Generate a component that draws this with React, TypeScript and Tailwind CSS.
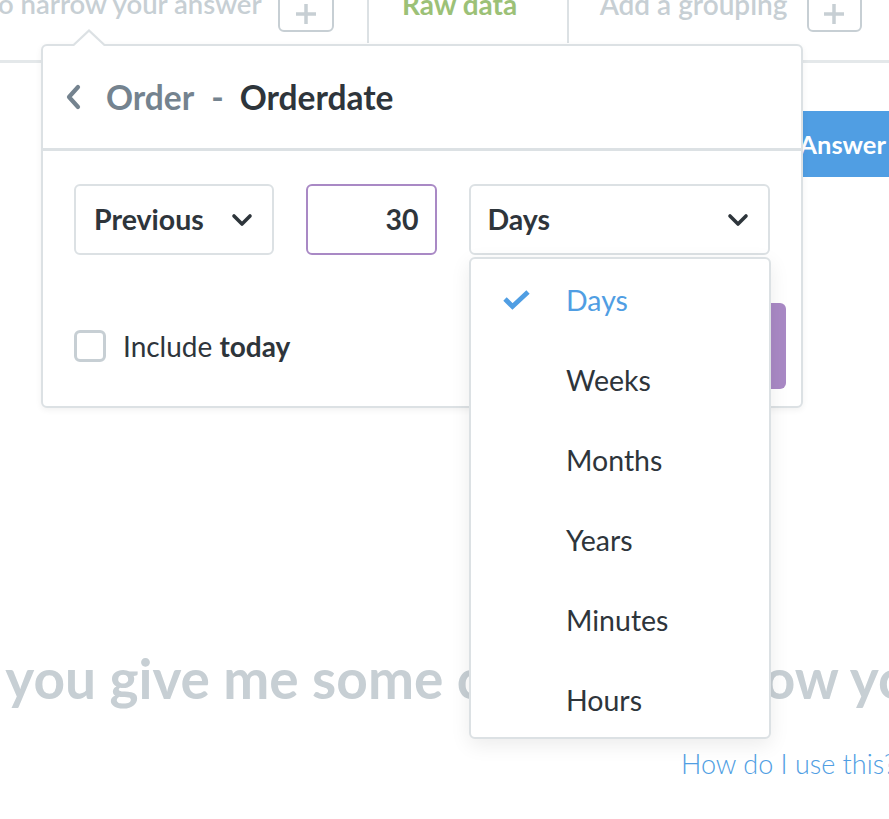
import React from 'react';

const Chevron = ({ className = '' }: { className?: string }) => (
  <svg className={className} viewBox="0 0 24 24" fill="none" stroke="currentColor" strokeWidth={3.6} strokeLinecap="round" strokeLinejoin="round">
    <path d="M4 8l8 8 8-8" />
  </svg>
);

const Plus = () => (
  <svg className="w-[22px] h-[22px] text-[#c7cfd4]" viewBox="0 0 22 22" fill="none" stroke="currentColor" strokeWidth={3.5}>
    <path d="M11 1v20M1 11h20" />
  </svg>
);

const options = ['Days', 'Weeks', 'Months', 'Years', 'Minutes', 'Hours'];

export default function App() {
  return (
    <div className="relative w-[889px] h-[819px] overflow-hidden bg-white font-['Lato','Noto_Sans',sans-serif]">
      {/* top query bar */}
      <div className="h-[63px] border-b-[3px] border-[#e4e8ea] flex">
        <div className="flex items-start -mt-[14px] -ml-[12px]">
          <span className="text-[27.5px] font-semibold text-[#c7cfd4] leading-[36px] whitespace-nowrap">to narrow your answer</span>
          <div className="ml-[16px] w-[56px] h-[46px] border-2 border-[#c7cfd4] rounded-[6px] flex items-center justify-center pt-[10px]">
            <Plus />
          </div>
        </div>
        <div className="ml-[33px] h-[43px] border-l-2 border-[#dce1e4]" />
        <div className="-mt-[14px] w-[198px] flex justify-center">
          <span className="text-[28px] font-bold text-[#9cc177] leading-[36px] -ml-[16px]">Raw data</span>
        </div>
        <div className="h-[43px] border-l-2 border-[#dce1e4]" />
        <div className="flex items-start -mt-[14px] ml-[31px]">
          <span className="text-[28px] font-semibold text-[#c7cfd4] leading-[36px] whitespace-nowrap">Add a grouping</span>
          <div className="ml-[19px] w-[55px] h-[46px] border-2 border-[#c7cfd4] rounded-[6px] flex items-center justify-center pt-[10px]">
            <Plus />
          </div>
        </div>
      </div>

      {/* answer button row */}
      <div className="flex justify-end mt-[48px]">
        <div className="h-[66px] bg-[#509ee3] text-white font-bold text-[25.5px] flex items-center pl-[24px] -mr-[14px] pr-[17px]">Get Answer</div>
      </div>

      {/* big prompt */}
      <div className="mt-[469px] -ml-[150px] whitespace-nowrap text-[55px] font-bold text-[#c7cfd4] leading-[64px]">
        Could you give me some context on how you want to narrow your answer?
      </div>
      <div className="mt-[36px] pl-[681px] whitespace-nowrap text-[27px] font-light text-[#509ee3] leading-[36px]">
        How do I use this?
      </div>

      {/* popover */}
      <div className="absolute left-[41px] top-[44px] w-[762px] h-[364px] bg-white border-2 border-[#dce1e4] rounded-[6px] shadow-[0_2px_6px_rgba(0,0,0,0.06)]">
        <div className="absolute -top-[17px] left-[28px] w-0 h-0 border-l-[18px] border-r-[18px] border-b-[17px] border-l-transparent border-r-transparent border-b-[#dce1e4]" />
        <div className="absolute -top-[14px] left-[30px] w-0 h-0 border-l-[16px] border-r-[16px] border-b-[15px] border-l-transparent border-r-transparent border-b-white" />
        <div className="h-[105px] border-b-[3px] border-[#dce1e4] flex items-center pl-[22px]">
          <svg className="w-[18px] h-[26px] text-[#74838f]" viewBox="0 0 18 26" fill="none" stroke="currentColor" strokeWidth={4.2} strokeLinecap="round" strokeLinejoin="round">
            <path d="M13 3L4 13l9 10" />
          </svg>
          <span className="ml-[23px] text-[33.5px] font-bold text-[#74838f]">Order</span>
          <span className="ml-[17px] text-[33.5px] font-bold text-[#74838f]">-</span>
          <span className="ml-[16px] text-[33.5px] font-bold text-[#2e353b]">Orderdate</span>
        </div>
        <div className="px-[31px] pt-[33px]">
          <div className="flex gap-[32px]">
            <div className="w-[200px] h-[71px] border-2 border-[#dce1e4] rounded-[6px] flex items-center justify-between pl-[18px] pr-[18px] text-[#2e353b]">
              <span className="text-[28.5px] font-bold">Previous</span>
              <Chevron className="w-[24px] h-[24px]" />
            </div>
            <div className="w-[131px] h-[71px] border-2 border-[#a989c5] rounded-[6px] flex items-center justify-end pr-[16px] text-[#2e353b] text-[28.5px] font-bold">30</div>
            <div className="w-[302px] h-[71px] border-2 border-[#dce1e4] rounded-[6px] flex items-center justify-between pl-[17px] pr-[18px] text-[#2e353b]">
              <span className="text-[28.5px] font-bold">Days</span>
              <Chevron className="w-[24px] h-[24px]" />
            </div>
          </div>
          <div className="mt-[48px] flex items-center justify-between">
            <div className="flex items-center">
              <div className="w-[32px] h-[32px] border-[3px] border-[#c7cfd4] rounded-[6px]" />
              <span className="ml-[17px] text-[28px] text-[#2e353b]">Include <span className="font-bold">today</span></span>
            </div>
            <div className="-mr-[16px] w-[160px] h-[86px] bg-[#a989c5] rounded-[6px]" />
          </div>
        </div>
      </div>

      {/* dropdown */}
      <div className="absolute left-[469px] top-[257px] w-[302px] h-[482px] bg-white border-2 border-[#dce1e4] rounded-[6px] shadow-[0_6px_20px_rgba(0,0,0,0.08)] py-[1px]">
        {options.map((o, i) => (
          <div key={o} className="h-[80px] flex items-center">
            <div className="w-[95px] pl-[32px]">
              {i === 0 && (
                <svg className="w-[27px] h-[20px] text-[#509ee3]" viewBox="0 0 27 20" fill="none" stroke="currentColor" strokeWidth={4.8} strokeLinejoin="miter">
                  <path d="M2 9l7.5 7.5L25 2" />
                </svg>
              )}
            </div>
            <span className={`text-[28.5px] ${i === 0 ? 'text-[#509ee3]' : 'text-[#2e353b]'}`}>{o}</span>
          </div>
        ))}
      </div>
    </div>
  );
}
